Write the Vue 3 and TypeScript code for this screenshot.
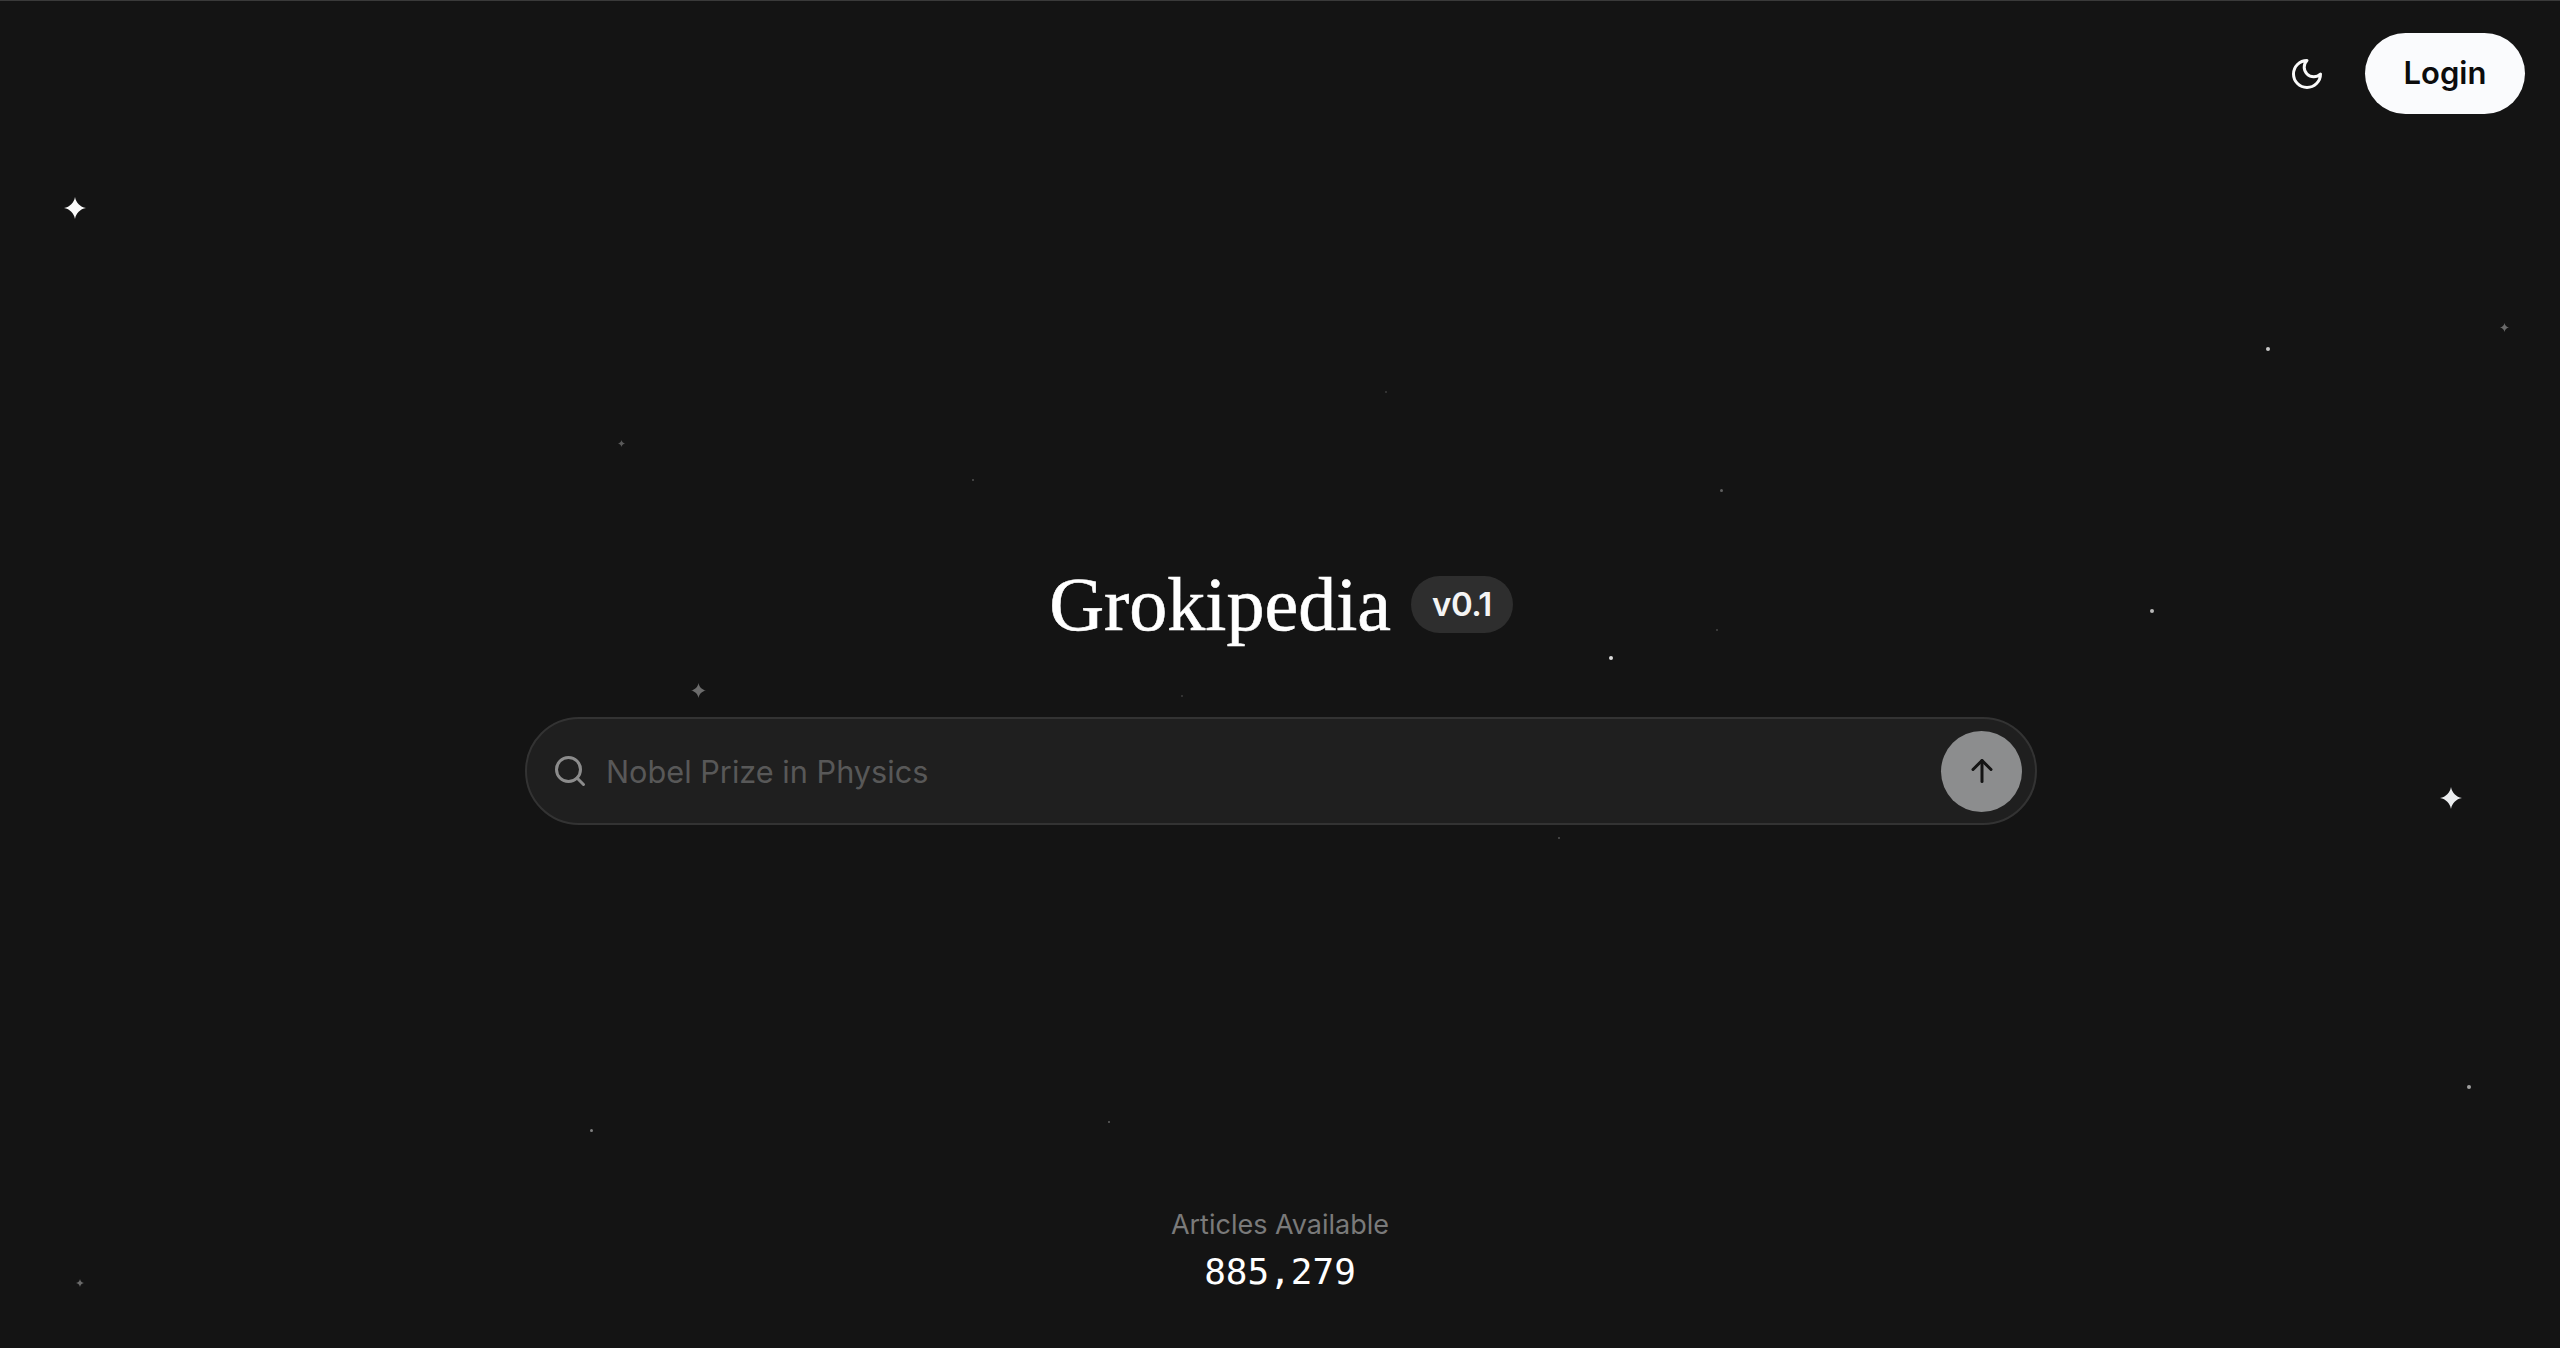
<script setup lang="ts">
import { ref } from 'vue'

interface Star {
  x: number
  y: number
  size: number
  color: string
}

const query = ref('')

// sparkles and dots of the background, x/y is the centre
const sparkles: Star[] = [
  { x: 75, y: 208, size: 22, color: '#fafafa' },
  { x: 2451, y: 798, size: 22, color: '#eceef0' },
  { x: 698, y: 690, size: 15, color: '#6c6c6c' },
  { x: 2504, y: 327, size: 9, color: '#6a6a6a' },
  { x: 621, y: 443, size: 7, color: '#5a5a5a' },
  { x: 80, y: 1283, size: 8, color: '#6a6a6a' }
]

const dots: Star[] = [
  { x: 2268, y: 349, size: 4, color: '#c8c8c8' },
  { x: 2152, y: 611, size: 4, color: '#b8b8b8' },
  { x: 1611, y: 658, size: 4, color: '#dcdcdc' },
  { x: 2469, y: 1087, size: 4, color: '#a0a0a0' },
  { x: 591, y: 1130, size: 3, color: '#808080' },
  { x: 1109, y: 1122, size: 2, color: '#606060' },
  { x: 973, y: 480, size: 2, color: '#505050' },
  { x: 1386, y: 392, size: 2, color: '#3c3c3c' },
  { x: 1721, y: 490, size: 3, color: '#606060' },
  { x: 1717, y: 630, size: 2, color: '#444444' },
  { x: 1182, y: 696, size: 2, color: '#3c3c3c' },
  { x: 1559, y: 838, size: 2, color: '#505050' }
]

const place = (s: Star) => ({
  left: `${s.x - s.size / 2}px`,
  top: `${s.y - s.size / 2}px`,
  width: `${s.size}px`,
  height: `${s.size}px`,
  color: s.color
})
</script>

<template>
  <div class="page">
    <div class="sky">
      <svg
        v-for="(s, i) in sparkles"
        :key="'s' + i"
        class="star"
        :style="place(s)"
        viewBox="0 0 24 24"
      >
        <path d="M12 0C13.2 6.5 17.5 10.8 24 12C17.5 13.2 13.2 17.5 12 24C10.8 17.5 6.5 13.2 0 12C6.5 10.8 10.8 6.5 12 0Z" fill="currentColor" />
      </svg>
      <span
        v-for="(d, i) in dots"
        :key="'d' + i"
        class="dot"
        :style="{ ...place(d), background: d.color }"
      ></span>
    </div>

    <header class="top">
      <button class="theme" aria-label="Theme">
        <svg viewBox="0 0 24 24" width="36" height="36" fill="none" stroke="currentColor" stroke-width="2" stroke-linecap="round" stroke-linejoin="round">
          <path d="M12 3a6 6 0 0 0 9 9 9 9 0 1 1-9-9Z" />
        </svg>
      </button>
      <button class="login">Login</button>
    </header>

    <main class="center">
      <div class="brand">
        <h1>Grokipedia</h1>
        <span class="badge">v0.1</span>
      </div>
      <form class="search" @submit.prevent>
        <svg class="lens" viewBox="0 0 24 24" width="36" height="36" fill="none" stroke="currentColor" stroke-width="2" stroke-linecap="round" stroke-linejoin="round">
          <circle cx="11" cy="11" r="8" />
          <path d="m21 21-4.3-4.3" />
        </svg>
        <input v-model="query" type="text" placeholder="Nobel Prize in Physics" />
        <button class="go" type="submit" aria-label="Search">
          <svg viewBox="0 0 24 24" width="36" height="36" fill="none" stroke="currentColor" stroke-width="2" stroke-linecap="round" stroke-linejoin="round">
            <path d="m6 11 6-6 6 6" />
            <path d="M12 19V5" />
          </svg>
        </button>
      </form>
    </main>

    <footer class="stats">
      <div class="label">Articles Available</div>
      <div class="count">885,279</div>
    </footer>
  </div>
</template>

<style scoped>
.page {
  position: relative;
  box-sizing: border-box;
  height: 100vh;
  display: flex;
  flex-direction: column;
  align-items: center;
  background: #141414;
  border-top: 1px solid #3a3a3a;
  overflow: hidden;
  font-family: Inter, "Liberation Sans", sans-serif;
}

.sky {
  position: absolute;
  inset: -1px 0 0 0;
  pointer-events: none;
}

.star,
.dot {
  position: absolute;
}

.dot {
  border-radius: 50%;
}

.top {
  position: relative;
  align-self: stretch;
  display: flex;
  justify-content: flex-end;
  align-items: center;
  gap: 40px;
  padding: 32px 35px 0 0;
}

.theme {
  display: flex;
  padding: 0;
  border: none;
  background: none;
  color: #fafafa;
}

.login {
  width: 160px;
  height: 81px;
  padding: 0 0 2px;
  border: none;
  border-radius: 41px;
  background: #fafbfd;
  color: #0c0c0c;
  font: 600 31px Inter, sans-serif;
}

.center {
  position: relative;
  margin: 434px 0 0 2px;
  display: flex;
  flex-direction: column;
  align-items: center;
}

.brand {
  display: flex;
  align-items: center;
  gap: 20px;
  height: 112px;
}

h1 {
  margin: 0;
  font: 400 76px "Liberation Serif", serif;
  color: #fff;
  -webkit-text-stroke: 0.6px #fff;
}

.badge {
  display: flex;
  align-items: center;
  height: 57px;
  padding: 0 21px;
  border-radius: 29px;
  background: #2e2e2e;
  color: #f4f4f4;
  font-size: 33px;
  font-weight: 600;
  letter-spacing: -0.5px;
}

.search {
  box-sizing: border-box;
  width: 1512px;
  height: 108px;
  margin-top: 57px;
  display: flex;
  align-items: center;
  padding: 0 13px 0 25px;
  border: 2px solid #333;
  border-radius: 54px;
  background: #1f1f1f;
}

.lens {
  flex: none;
  color: #8c8c8c;
}

input {
  flex: 1;
  min-width: 0;
  margin-left: 18px;
  padding: 0;
  border: none;
  outline: none;
  background: none;
  color: #fff;
  font: 400 30.7px Inter, sans-serif;
}

input::placeholder {
  color: #585858;
  opacity: 1;
}

.go {
  flex: none;
  width: 81px;
  height: 81px;
  display: flex;
  align-items: center;
  justify-content: center;
  padding: 0;
  border: none;
  border-radius: 50%;
  background: #8c8d8e;
  color: #141414;
}

.stats {
  position: relative;
  margin-top: auto;
  padding-bottom: 54px;
  text-align: center;
}

.label {
  color: #7a7a7a;
  font-size: 27px;
  line-height: 36px;
}

.count {
  margin-top: 7px;
  color: #fff;
  font: 400 36px/44px "DejaVu Sans Mono", monospace;
}
</style>

<style>
body {
  background: #141414;
}
</style>
